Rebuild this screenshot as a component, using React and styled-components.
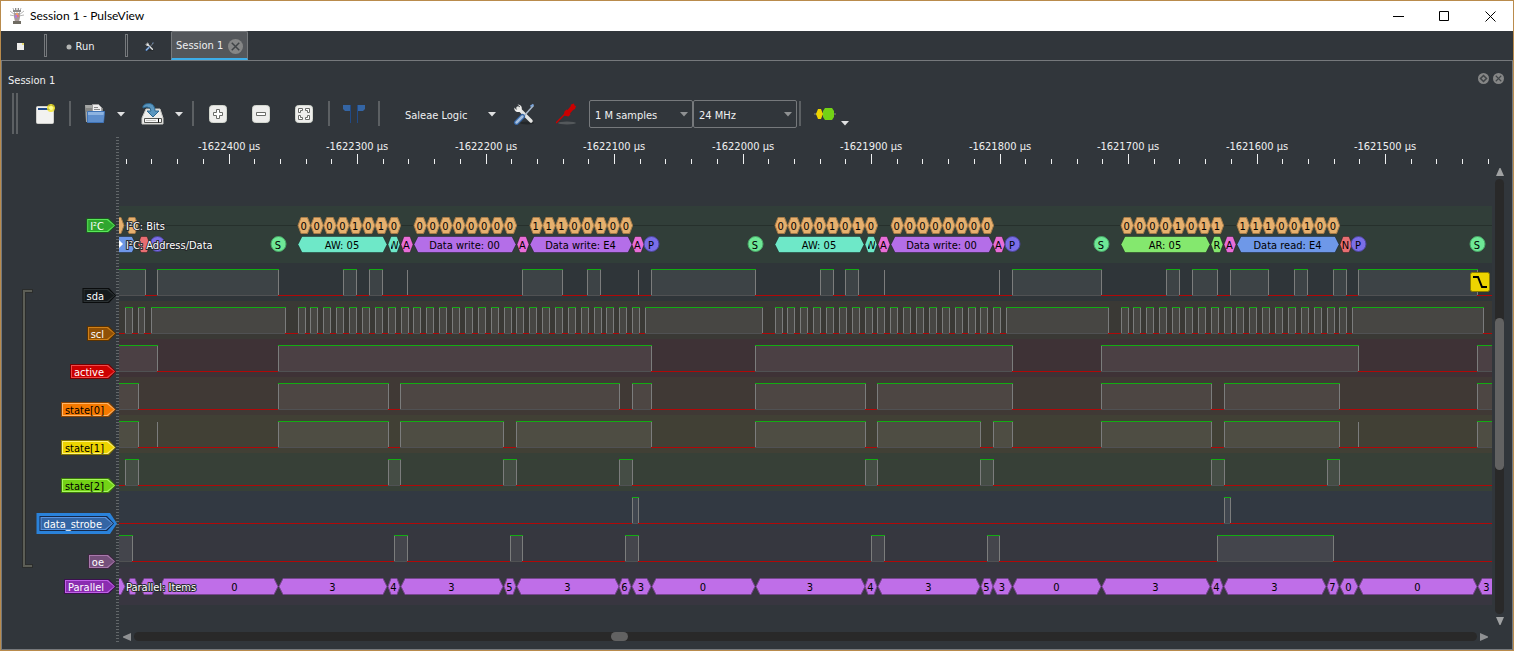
import styled, { css, createGlobalStyle } from 'styled-components';

const GlobalStyle = createGlobalStyle`
  * {
    box-sizing: border-box;
  }
  body {
    margin: 0;
    background: #31363b;
    color: #eff0f1;
    font-family: "DejaVu Sans Condensed", "DejaVu Sans", sans-serif;
    font-size: 11px;
    line-height: 14px;
  }
  button, select {
    font: inherit;
    color: inherit;
    border: 0;
    padding: 0;
    background: none;
  }
  svg {
    display: block;
    flex: none;
  }
`;

const Window = styled.div`
  display: flex;
  flex-direction: column;
  min-height: 100vh;
  border: 1px solid #b98b4c;
`;

const TitleBar = styled.header`
  display: flex;
  align-items: center;
  height: 30px;
  padding-left: 8px;
  background: #fff;
  color: #000;
`;

const Title = styled.h1`
  flex: 1;
  margin: 0 0 0 5px;
  font-family: Lato, "Noto Sans", sans-serif;
  font-size: 12px;
  font-weight: 400;
`;

const CaptionButton = styled.button`
  display: flex;
  align-items: center;
  justify-content: center;
  width: 46px;
  height: 30px;
`;

const MainBar = styled.nav`
  display: flex;
  align-items: center;
  height: 29px;
`;

const MainButton = styled.button`
  display: flex;
  align-items: center;
  justify-content: center;
  gap: 4px;
  width: ${props => props.$width}px;
  height: 24px;
  padding-top: 2px;
`;

const Grip = styled.div`
  width: 3px;
  height: 23px;
  margin-left: ${props => props.$space}px;
  border: 1px solid #76797c;
`;

const Tab = styled.div`
  display: flex;
  align-items: center;
  gap: 5px;
  height: 29px;
  padding: 2px 4px 0;
  border: 1px solid #76797c;
  border-bottom: 2px solid #3daee9;
  border-radius: 2px 2px 0 0;
  background: #54575b;
`;

const Panel = styled.main`
  display: flex;
  flex-direction: column;
  flex: 1;
  padding-bottom: 5px;
  border: 1px solid #76797c;
`;

const DockTitle = styled.div`
  display: flex;
  align-items: center;
  gap: 4px;
  height: 32px;
  padding: 3px 8px 0 6px;
`;

const DockName = styled.h2`
  flex: 1;
  margin: 0;
  padding-top: 4px;
  font-size: 11px;
  font-weight: 400;
`;

const Toolbar = styled.div`
  display: flex;
  align-items: center;
  gap: 11px;
  height: 41px;
  padding-left: 10px;
`;

const ToolbarGrip = styled.div`
  width: 6px;
  height: 41px;
  border: solid #5c6063;
  border-width: 0 2px;
`;

const Separator = styled.div`
  width: 2px;
  height: 25px;
  margin: 0 -3px;
  background: #5c6063;
`;

const IconButton = styled.button`
  display: flex;
  align-items: center;
  justify-content: center;
  width: 32px;
  height: 32px;
`;

const Split = styled.div`
  display: flex;
`;

const ArrowButton = styled.button`
  display: flex;
  align-items: center;
  justify-content: flex-end;
  width: 15px;
  padding-right: 1px;
  ${props =>
    props.$low &&
    css`
      align-items: flex-end;
      justify-content: flex-start;
      padding-bottom: 3px;
    `}
`;

const DeviceButton = styled.button`
  display: flex;
  align-items: center;
  justify-content: space-between;
  width: 109px;
  height: 32px;
  padding: 0 1px 0 17px;
  span {
    padding-top: 4px;
  }
`;

const Selects = styled.div`
  display: flex;
  margin: 0 -6px 0 -5px;
`;

const SelectBox = styled.label`
  display: grid;
  align-items: center;
  width: 104px;
  height: 28px;
  border: 1px solid #76797c;
  border-radius: 2px;
  select, svg {
    grid-area: 1 / 1;
  }
  svg {
    justify-self: end;
    margin-right: 4px;
    pointer-events: none;
  }
`;

const Select = styled.select`
  appearance: none;
  width: 100%;
  height: 26px;
  padding: 4px 16px 0 5px;
  outline: none;
`;

const View = styled.div`
  display: flex;
  flex: 1;
`;

const Labels = styled.div`
  display: flex;
  flex-direction: column;
  align-items: flex-end;
  width: 114px;
  padding-top: 84px;
`;

const Group = styled.div`
  display: flex;
  justify-content: space-between;
  align-self: stretch;
  margin: 55px 0 0 20px;
`;

const GroupTags = styled.div`
  display: flex;
  flex-direction: column;
  align-items: flex-end;
  gap: 23px;
  padding-bottom: 10px;
`;

const TagButton = styled.button`
  display: grid;
  margin: ${props => (props.$selected ? '-3px -1px -3px 0' : '0')};
  > span {
    grid-area: 1 / 1;
  }
`;

const TagShape = styled.span`
  display: grid;
  padding: ${props => props.$pad}px;
  background: ${props => props.$color};
  clip-path: polygon(0 0, calc(100% - 7px) 0, 100% 50%, calc(100% - 7px) 100%, 0 100%);
`;

const TagText = styled.span`
  position: relative;
  height: 15px;
  margin: ${props => (props.$selected ? 3 : 0)}px;
  padding: 0 12px 0 4px;
  line-height: 17px;
  color: ${props => props.$color};
`;

const Splitter = styled.div`
  width: 3px;
  margin: 3px 0 0;
  background: repeating-linear-gradient(#62676a 0 1px, #31363b 1px 3px);
`;

const Timeline = styled.div`
  display: flex;
  flex-direction: column;
  flex: 1;
  min-width: 0;
  padding-right: 5px;
`;

const RulerArea = styled.svg`
  width: 100%;
  height: 33px;
  fill: #eff0f1;
`;

const Body = styled.div`
  display: flex;
  flex: 1;
`;

const Traces = styled.div`
  flex: 1;
  min-width: 0;
  padding: 39px 0 23px;
`;

const Trace = styled.svg`
  width: 100%;
  height: ${props => props.$height}px;
  background: ${props => props.$bg};
  overflow: hidden;
`;

const ItemText = styled.text`
  fill: #000;
  text-anchor: middle;
`;

const TraceName = styled.text`
  fill: #fff;
  stroke: #26292c;
  stroke-width: 2px;
  stroke-linejoin: round;
  paint-order: stroke;
`;

const VScroll = styled.div`
  display: flex;
  flex-direction: column;
  align-items: center;
  gap: 3px;
  width: 15px;
  padding: 1px 0 4px;
`;

const HScroll = styled.div`
  display: flex;
  align-items: center;
  gap: 3px;
  height: 15px;
  margin-right: 15px;
  padding: 0 4px;
`;

const Track = styled.div`
  display: grid;
  flex: 1;
  border-radius: 5px;
  background: #292929;
  ${props =>
    props.$vertical
      ? css`
          width: 9px;
          grid-template-rows: 32fr 35fr 33fr;
        `
      : css`
          height: 9px;
          grid-template-columns: 36fr 17px 64fr;
        `}
`;

const Thumb = styled.div`
  border-radius: 5px;
  background: #626262;
  ${props => (props.$vertical ? 'grid-row: 2;' : 'grid-column: 2;')}
`;

// left edge of the trace area in view coordinates
const ORIGIN = 119;
const END = 4000;
const CLOCK = 12.87;

const clock = (start, count) =>
  Array.from({ length: count }, (_, i) => [start + i * CLOCK, start + i * CLOCK + 7]);

const signals = [
  {
    name: 'sda', bg: '#2f3539', dark: '#0a0c0d', light: '#2b3133', fill: '#15191b', trigger: true,
    high: [[110, 145], [157, 278], [343, 356], [369, 382], [407, 407], [522, 562], [587, 600], [638, 638],
      [651, 755], [820, 833], [845, 858], [884, 884], [999, 999], [1012, 1101], [1166, 1179], [1192, 1217],
      [1230, 1268], [1294, 1307], [1333, 1346], [1358, 1477]],
  },
  {
    name: 'scl', bg: '#3a3935', dark: '#5a3200', light: '#d08018', fill: '#8f5006',
    high: [[125, 132], [138, 144], [151, 285], ...clock(297.6, 27), [645, 762], ...clock(774.5, 18),
      [1006, 1108], ...clock(1120.6, 18), [1352, 1483]],
  },
  {
    name: 'active', bg: '#3e3236', dark: '#780000', light: '#f04848', fill: '#cc0000',
    high: [[110, 157], [278, 651], [755, 1012], [1101, 1358], [1477, END]],
  },
  {
    name: 'state[0]', bg: '#403935', dark: '#8a4400', light: '#ffb468', fill: '#f57900', ink: '#000',
    high: [[110, 138], [278, 388], [400, 619], [632, 651], [755, 865], [877, 1012], [1101, 1211],
      [1224, 1339], [1477, END]],
  },
  {
    name: 'state[1]', bg: '#414035', dark: '#837500', light: '#fff27a', fill: '#edd400', ink: '#000',
    high: [[110, 138], [157, 157], [278, 388], [400, 503], [516, 651], [755, 865], [877, 980], [993, 1012],
      [1101, 1211], [1224, 1339], [1358, 1358], [1477, END]],
  },
  {
    name: 'state[2]', bg: '#374037', dark: '#3c7a08', light: '#a8f860', fill: '#73d216', ink: '#000',
    high: [[125, 138], [388, 400], [503, 516], [619, 632], [865, 877], [980, 993], [1211, 1224], [1327, 1339]],
  },
  {
    name: 'data_strobe', bg: '#323942', dark: '#16294a', light: '#5a94e0', fill: '#3465a4', selected: true,
    high: [[632, 638], [1224, 1230]],
  },
  {
    name: 'oe', bg: '#36373f', dark: '#3c2840', light: '#a878ac', fill: '#75507b',
    high: [[110, 132], [394, 407], [510, 522], [625, 638], [871, 884], [987, 999], [1217, 1333]],
  },
];

const bits = [
  [298, '00001010'],
  [414, '00000000'],
  [530, '11100100'],
  [775, '00001010'],
  [891, '00000000'],
  [1121, '00001011'],
  [1237, '11100100'],
];

const TEAL = '#6ee8c8';
const PINK = '#e86ed8';
const PURPLE = '#b46ee8';
const BLUE = '#6e98e8';
const RED = '#e86e72';
const LIME = '#84e86e';
const BIT = '#e6b06e';

const addressItems = [
  [110, 136, BLUE], [138, 150, RED],
  [298, 387, TEAL, 'AW: 05'], [388, 400, TEAL, 'W'], [401, 413, PINK, 'A'],
  [414, 516, PURPLE, 'Data write: 00'], [517, 529, PINK, 'A'],
  [530, 632, PURPLE, 'Data write: E4'], [632, 644, PINK, 'A'],
  [775, 864, TEAL, 'AW: 05'], [865, 877, TEAL, 'W'], [878, 890, PINK, 'A'],
  [891, 993, PURPLE, 'Data write: 00'], [993, 1005, PINK, 'A'],
  [1121, 1210, LIME, 'AR: 05'], [1211, 1223, LIME, 'R'], [1224, 1236, PINK, 'A'],
  [1237, 1339, BLUE, 'Data read: E4'], [1340, 1352, RED, 'N'],
];

const addressMarks = [
  [157, ''], [278, 'S'], [651, 'P'], [755, 'S'], [1012, 'P'], [1101, 'S'], [1358, 'P'], [1477, 'S'],
];

const parallelItems = [
  [100, 125], [127, 138], [140, 156], [160, 278, '0', 235], [279, 387, '3'], [388, 400, '4'],
  [401, 503, '3'], [504, 516, '5'], [517, 619, '3'], [619, 631, '6'], [632, 651, '3'],
  [652, 755, '0'], [756, 865, '3'], [865, 877, '4'], [878, 980, '3'], [981, 993, '5'],
  [993, 1012, '3'], [1013, 1101, '0'], [1102, 1210, '3'], [1211, 1223, '4'], [1224, 1326, '3'],
  [1327, 1339, '7'], [1340, 1358, '0'], [1359, 1477, '0'], [1478, 1590, '3', 1487],
];

function Arrow({ dir = 'down', color = '#e0e1e2', tall }) {
  const turn = { down: 0, left: 90, up: 180, right: 270 }[dir];
  return (
    <svg width="8" height="8" viewBox="0 0 8 8" aria-hidden="true">
      <path d={tall ? 'M0 0h8L4.500 8h-1z' : 'M0 2h8L4 6.500z'} fill={color} transform={`rotate(${turn} 4 4)`} />
    </svg>
  );
}

function CloseDot({ size, float }) {
  return (
    <svg width={size} height={size} viewBox="0 0 14 14" aria-hidden="true">
      <circle cx="7" cy="7" r="7" fill="#858686" />
      <path
        d={float ? 'M7 3.200L10.800 7L7 10.800L3.200 7z' : 'M3.500 3.500l7 7m0-7l-7 7'}
        fill="none" stroke="#404447" strokeWidth={float ? 2 : 1.4}
      />
    </svg>
  );
}

function AppIcon() {
  return (
    <svg width="16" height="18" viewBox="0 0 16 18" aria-hidden="true">
      <path d="M8 1v6M4 1l2 6M12 1l-2 6M1 4l5 4M15 4l-5 4M1 8l5 1M15 8l-5 1" stroke="#b5b5b5" />
      <path d="M6 1h1v2h2V1h1v2h2v2H4V3h2z" fill="#8b8b8b" />
      <path d="M5 6h6v4l-1 5H6L5 10z" fill="#a89a9a" />
      <path d="M7 6h2v3H7z" fill="#ef9a6a" />
      <path d="M6 8h2v3H6z" fill="#b07ad8" />
      <path d="M8 8h2v2H8z" fill="#e07878" />
      <path d="M4 14h8v3H4z" fill="#6f6b62" />
    </svg>
  );
}

function NewIcon() {
  return (
    <svg width="22" height="22" viewBox="0 0 22 22" aria-hidden="true">
      <rect x="2.500" y="3.500" width="17" height="17" rx="1" fill="#f2f2f0" stroke="#d0d0cc" />
      <path d="M4 5h13v2H4z" fill="#204a87" />
      <circle cx="17" cy="5" r="4" fill="#f0e020" opacity=".75" />
      <path d="M17 1v8M13 5h8" stroke="#f8ee40" />
      <circle cx="17" cy="5" r="2" fill="#ffff90" />
    </svg>
  );
}

function OpenIcon() {
  return (
    <svg width="22" height="22" viewBox="0 0 22 22" aria-hidden="true">
      <path d="M1 2h7v17H2z" fill="#a4a6a4" />
      <path d="M2 5h17v4H2z" fill="#868886" />
      <path d="M8.500 1.500h6l3 3v6h-9z" fill="#eee" stroke="#a0a0a0" />
      <path d="M10 4.500h4M10 6.500h6" stroke="#888" />
      <path d="M3.500 8.500h17l-1 11h-16z" fill="#8db3e0" stroke="#3f74b8" />
      <path d="M4 12h16l-1 7H4z" fill="#5f8fcc" />
    </svg>
  );
}

function SaveIcon() {
  return (
    <svg width="24" height="24" viewBox="0 0 24 24" aria-hidden="true">
      <path d="M5 7h14l3 9v6H1v-6z" fill="#eeeeec" stroke="#c8c8c4" />
      <path d="M3.500 16.500h17v4h-17z" fill="#f8f8f8" stroke="#555753" />
      <path d="M5 18.500h10" stroke="#c4c4c0" />
      <path d="M17.500 16.500v4" stroke="#111" />
      <path d="M2 4Q4 1 9 1.500q5 1 5 7.500h4l-6 6-6-6h4q0-4-4-4-2 0-4 1z" fill="#5b97c0" stroke="#2d6890" />
    </svg>
  );
}

function ZoomIcon({ kind }) {
  return (
    <svg width="20" height="20" viewBox="0 0 20 20" aria-hidden="true">
      <rect x="1.500" y="1.500" width="17" height="17" rx="3" fill="#eeeeec" stroke="#d3d7cf" />
      <g fill="#fff" stroke="#6a6c68">
        {kind === 'in' && <path d="M8.500 5.500h3v3h3v3h-3v3h-3v-3h-3v-3h3z" />}
        {kind === 'out' && <path d="M5.500 8.500h9v3h-9z" />}
        {kind === 'fit' && (
          <path d="M4.500 4.500h4v2h-2v2h-2zM11.500 4.500h4v4h-2v-2h-2zM4.500 11.500h2v2h2v2h-4zM13.500 11.500h2v4h-4v-2h2z" />
        )}
      </g>
    </svg>
  );
}

function CursorsIcon() {
  return (
    <svg width="22" height="20" viewBox="0 0 22 20" aria-hidden="true">
      <path d="M0 1h8v6H2L0 5z" fill="#3465a4" />
      <path d="M14 1h8v4l-2 2h-6z" fill="#3465a4" />
      <path d="M7.500 1v18M14.500 1v18" stroke="#204a87" />
    </svg>
  );
}

function ToolsIcon({ size }) {
  return (
    <svg width={size} height={size} viewBox="0 0 22 22" aria-hidden="true">
      <ellipse cx="14" cy="20" rx="7" ry="1.500" fill="#23272a" />
      <path d="M5 5L18 18" stroke="#e4e5e3" strokeWidth="3.500" strokeLinecap="round" />
      <path d="M4.500 1.500l2.500 2-1 2.500-3 .5-1.500-2C.5 8 4 10 7.500 8.500 10 6 9 1.500 4.500 1.500z" fill="#eeeeec" />
      <path d="M20.500 2.500l-10 11" stroke="#a9b8c8" strokeWidth="1.500" />
      <path d="M20.500 1.500l-3 2" stroke="#7ba4d8" strokeWidth="2" />
      <path d="M9.500 13.500L3.500 19.500" stroke="#3465a4" strokeWidth="5" strokeLinecap="round" />
      <path d="M9.500 13.500L3.500 19.500" stroke="#a4bedd" strokeWidth="2.500" strokeLinecap="round" />
    </svg>
  );
}

function ProbeIcon() {
  return (
    <svg width="22" height="22" viewBox="0 0 22 22" aria-hidden="true">
      <ellipse cx="11" cy="20" rx="9" ry="1.500" fill="#54585b" />
      <path d="M0 20L10 10" stroke="#cc0000" strokeWidth="1.500" />
      <path d="M7.500 12.500l1-4 2-2 1 .5 3-3.500.5-2 3-1 .5 2 1.500.5-1 3-2 1-3 3.500.500 1-2 2z" fill="#cc0000" />
    </svg>
  );
}

function DecoderIcon() {
  return (
    <svg width="22" height="12" viewBox="0 0 22 12" aria-hidden="true">
      <path d="M0 6h22" stroke="#888a85" />
      <path d="M4 1h3l2 5-2 5H4L2 6z" fill="#edd400" />
      <path d="M11 0h7l2 3v6l-2 3h-7L9 9V3z" fill="#73d216" />
    </svg>
  );
}

function Tag({ name, dark, light, fill, ink = '#fff', selected }) {
  const shape = (
    <TagShape $color={dark} $pad={1}>
      <TagShape $color={light} $pad={1}>
        <TagShape $color={fill} $pad={0} />
      </TagShape>
    </TagShape>
  );
  return (
    <TagButton $selected={selected}>
      {selected ? <TagShape $color="#2a82da" $pad={3}>{shape}</TagShape> : shape}
      <TagText $color={ink} $selected={selected}>{name}</TagText>
    </TagButton>
  );
}

function Ruler() {
  const ticks = [];
  for (let k = -4; k < 50; k += 1) {
    const x = Math.floor(229.05 + k * 25.7) - ORIGIN;
    const major = k % 5 === 0;
    ticks.push(
      <g key={k}>
        <rect x={x} y={major ? 20 : 25} width="1" height={major ? 10 : 5} />
        {major && <text x={x} y="16" textAnchor="middle">{`${-1622400 + k * 20} µs`}</text>}
      </g>
    );
  }
  return <RulerArea>{ticks}</RulerArea>;
}

function Signal({ bg, high, trigger }) {
  return (
    <Trace $height={38} $bg={bg} shapeRendering="crispEdges">
      <rect x="0" y="32" width={END} height="1" fill="#b00808" />
      {high.map(([from, to]) => {
        const a = Math.round(from) - ORIGIN;
        const b = Math.round(to) - ORIGIN;
        return (
          <g key={from}>
            <rect x={a} y="7" width={b - a} height="25" fill="#fff" opacity=".07" />
            <rect x={a} y="32" width={b - a} height="1" fill="#505153" />
            {b > a && <rect x={a} y="6" width={b - a + 1} height="1" fill="#12ac12" />}
            <rect x={a} y="7" width="1" height="25" fill="#7b7c7c" />
            <rect x={b} y="7" width="1" height="25" fill="#7b7c7c" />
          </g>
        );
      })}
      {trigger && (
        <g transform={`translate(${1470 - ORIGIN} 9)`} shapeRendering="auto">
          <rect x=".5" y=".5" width="19" height="19" rx="2" fill="#edd400" stroke="#8a7c00" />
          <path d="M3 5h5l4 10h5" fill="none" stroke="#000" strokeWidth="2" />
        </g>
      )}
    </Trace>
  );
}

function Hexagon({ from, to, y, height, fill, stroke, label, labelX, slope = 4 }) {
  const a = from - ORIGIN;
  const b = to - ORIGIN;
  const mid = y + height / 2;
  const baseline = Math.floor(mid) + 5;
  const clipped = label === 'W' || label === 'R';
  const center = (labelX || (from + to) / 2) - ORIGIN - 0.5;
  return (
    <g>
      <path
        d={`M${a} ${mid}L${a + slope} ${y}H${b - slope}L${b} ${mid}L${b - slope} ${y + height}H${a + slope}z`}
        fill={fill} stroke={stroke}
      />
      {clipped ? (
        <svg x={a + 3} y="0" width="7" height={baseline + 2}>
          <ItemText x="3" y={baseline}>{label}</ItemText>
        </svg>
      ) : (
        label && <ItemText x={center} y={baseline}>{label}</ItemText>
      )}
    </g>
  );
}

function I2cTrace() {
  const bit = { y: 11.5, height: 16, slope: 3, fill: BIT, stroke: '#a87c48' };
  return (
    <Trace $height={57} $bg="#313e39">
      <path d={`M0 19.500H${END}`} stroke="#26302c" />
      <Hexagon from={105} to={124} {...bit} />
      <Hexagon from={126} to={138} {...bit} />
      {bits.map(([start, word]) => (
        <g key={start}>
          <rect x={start - ORIGIN} y="18" width="103" height="3" fill="#313e39" />
          {word.split('').map((label, i) => (
            <Hexagon
              key={i} from={start + i * CLOCK} to={start + i * CLOCK + 12.5}
              label={label} {...bit}
            />
          ))}
        </g>
      ))}
      {addressItems.map(([from, to, color, label]) => (
        <Hexagon
          key={from} from={from} to={to} y={30.5} height={16} slope={to - from < 20 ? 3 : 4}
          fill={color} stroke="#00000055" label={label}
        />
      ))}
      <path d="M0 34l4 4-4 4z" fill="#fff" />
      {addressMarks.map(([x, label]) => (
        <g key={x}>
          <circle
            cx={x - ORIGIN + 0.5} cy="38" r="7.500"
            fill={label === 'S' ? '#6ee896' : '#7a6ee8'} stroke={label === 'S' ? '#4aa868' : '#4c449c'}
          />
          {label && <ItemText x={x - ORIGIN} y="43">{label}</ItemText>}
        </g>
      ))}
      <TraceName x="7" y="24">I²C: Bits</TraceName>
      <TraceName x="7" y="43">I²C: Address/Data</TraceName>
    </Trace>
  );
}

function ParallelTrace() {
  return (
    <Trace $height={38} $bg="#383640">
      {parallelItems.map(([from, to, label, labelX]) => (
        <Hexagon
          key={from} from={from} to={to} y={11.5} height={16} fill="#bf6ee8" stroke="#77458f"
          slope={to - from < 15 ? 3 : 4} label={label} labelX={labelX}
        />
      ))}
      <TraceName x="7" y="24">Parallel: Items</TraceName>
    </Trace>
  );
}

function App() {
  return (
    <>
      <GlobalStyle />
      <Window>
        <TitleBar>
          <AppIcon />
          <Title>Session 1 - PulseView</Title>
          <CaptionButton aria-label="Minimize">
            <svg width="11" height="11"><path d="M0 5.500h11" stroke="#000" /></svg>
          </CaptionButton>
          <CaptionButton aria-label="Maximize">
            <svg width="10" height="10"><path d="M.5.5h9v9h-9z" fill="none" stroke="#000" /></svg>
          </CaptionButton>
          <CaptionButton aria-label="Close">
            <svg width="11" height="11"><path d="M.5.5l10 10m0-10l-10 10" stroke="#000" /></svg>
          </CaptionButton>
        </TitleBar>

        <MainBar>
          <MainButton $width={38} aria-label="New session">
            <svg width="7" height="7">
              <rect width="7" height="7" fill="#eeeeec" />
              <rect x="5" width="2" height="2" fill="#e8dc70" />
            </svg>
          </MainButton>
          <Grip $space={5} />
          <MainButton $width={66}>
            <svg width="6" height="6"><circle cx="3" cy="3" r="2.500" fill="#b4b6b4" /></svg>
            Run
          </MainButton>
          <Grip $space={12} />
          <MainButton $width={43} aria-label="Settings"><ToolsIcon size={9} /></MainButton>
          <Tab>
            Session 1
            <button aria-label="Close session"><CloseDot size={15} /></button>
          </Tab>
        </MainBar>

        <Panel>
          <DockTitle>
            <DockName>Session 1</DockName>
            <button aria-label="Float"><CloseDot size={11} float /></button>
            <button aria-label="Close dock"><CloseDot size={11} /></button>
          </DockTitle>

          <Toolbar>
            <ToolbarGrip />
            <IconButton aria-label="New view"><NewIcon /></IconButton>
            <Separator />
            <Split>
              <IconButton aria-label="Open"><OpenIcon /></IconButton>
              <ArrowButton aria-label="Open menu"><Arrow /></ArrowButton>
            </Split>
            <Split>
              <IconButton aria-label="Save"><SaveIcon /></IconButton>
              <ArrowButton aria-label="Save menu"><Arrow /></ArrowButton>
            </Split>
            <Separator />
            <IconButton aria-label="Zoom in"><ZoomIcon kind="in" /></IconButton>
            <IconButton aria-label="Zoom out"><ZoomIcon kind="out" /></IconButton>
            <IconButton aria-label="Zoom to fit"><ZoomIcon kind="fit" /></IconButton>
            <Separator />
            <IconButton aria-label="Show cursors"><CursorsIcon /></IconButton>
            <Separator />
            <DeviceButton>
              <span>Saleae Logic</span>
              <Arrow />
            </DeviceButton>
            <IconButton aria-label="Configure device"><ToolsIcon size={22} /></IconButton>
            <IconButton aria-label="Configure channels"><ProbeIcon /></IconButton>
            <Selects>
              <SelectBox>
                <Select aria-label="Sample count"><option>1 M samples</option></Select>
                <Arrow color="#8f9193" />
              </SelectBox>
              <SelectBox>
                <Select aria-label="Sample rate"><option>24 MHz</option></Select>
                <Arrow color="#8f9193" />
              </SelectBox>
            </Selects>
            <Separator />
            <Split>
              <IconButton aria-label="Add decoder"><DecoderIcon /></IconButton>
              <ArrowButton $low aria-label="Decoder menu"><Arrow /></ArrowButton>
            </Split>
          </Toolbar>

          <View>
            <Labels>
              <Tag name="I²C" dark="#1c5a20" light="#58e858" fill="#2fa62f" />
              <Group>
                <svg width="11" height="281" aria-hidden="true">
                  <path d="M11 3H2V278H11" fill="none" stroke="#2b2d2c" strokeWidth="4" />
                  <path d="M10 3H2V278H10" fill="none" stroke="#5c5e56" strokeWidth="2" />
                </svg>
                <GroupTags>
                  {signals.map(signal => <Tag key={signal.name} {...signal} />)}
                </GroupTags>
              </Group>
              <Tag name="Parallel" dark="#3c1050" light="#c060e8" fill="#8a2cb0" />
            </Labels>
            <Splitter />
            <Timeline>
              <Ruler />
              <Body>
                <Traces>
                  <I2cTrace />
                  {signals.map(({ name, bg, high, trigger }) => (
                    <Signal key={name} bg={bg} high={high} trigger={trigger} />
                  ))}
                  <ParallelTrace />
                </Traces>
                <VScroll>
                  <Arrow dir="up" color="#a0a2a3" tall />
                  <Track $vertical><Thumb $vertical /></Track>
                  <Arrow dir="down" color="#a0a2a3" tall />
                </VScroll>
              </Body>
              <HScroll>
                <Arrow dir="left" color="#8f9193" tall />
                <Track><Thumb /></Track>
                <Arrow dir="right" color="#8f9193" tall />
              </HScroll>
            </Timeline>
          </View>
        </Panel>
      </Window>
    </>
  );
}

export default App;
